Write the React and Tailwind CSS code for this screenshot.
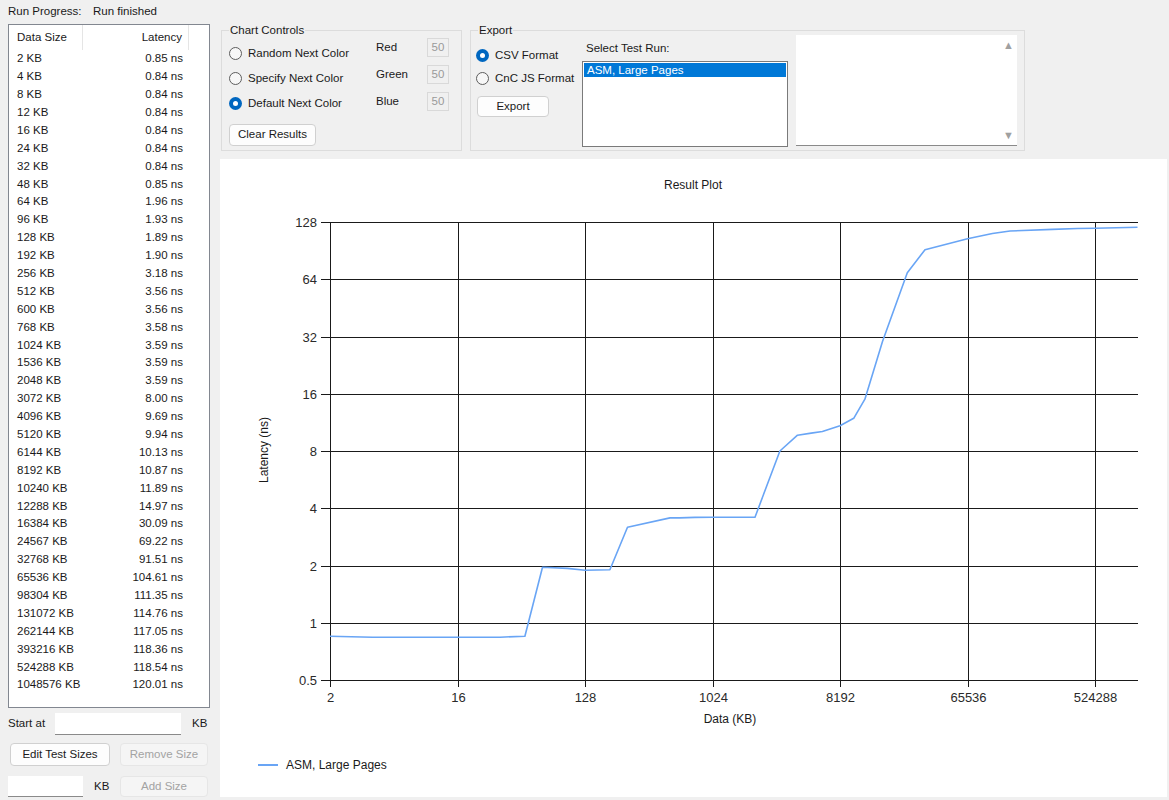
import React from 'react';

const rows = [
  ['2 KB', 2, 0.85], ['4 KB', 4, 0.84], ['8 KB', 8, 0.84], ['12 KB', 12, 0.84],
  ['16 KB', 16, 0.84], ['24 KB', 24, 0.84], ['32 KB', 32, 0.84], ['48 KB', 48, 0.85],
  ['64 KB', 64, 1.96], ['96 KB', 96, 1.93], ['128 KB', 128, 1.89], ['192 KB', 192, 1.9],
  ['256 KB', 256, 3.18], ['512 KB', 512, 3.56], ['600 KB', 600, 3.56], ['768 KB', 768, 3.58],
  ['1024 KB', 1024, 3.59], ['1536 KB', 1536, 3.59], ['2048 KB', 2048, 3.59], ['3072 KB', 3072, 8.0],
  ['4096 KB', 4096, 9.69], ['5120 KB', 5120, 9.94], ['6144 KB', 6144, 10.13], ['8192 KB', 8192, 10.87],
  ['10240 KB', 10240, 11.89], ['12288 KB', 12288, 14.97], ['16384 KB', 16384, 30.09], ['24567 KB', 24567, 69.22],
  ['32768 KB', 32768, 91.51], ['65536 KB', 65536, 104.61], ['98304 KB', 98304, 111.35], ['131072 KB', 131072, 114.76],
  ['262144 KB', 262144, 117.05], ['393216 KB', 393216, 118.36], ['524288 KB', 524288, 118.54], ['1048576 KB', 1048576, 120.01],
];

const font = "'Liberation Sans', Arial, sans-serif";

// plot mapping (page coordinates)
const px = (kb) => 330 + (Math.log2(kb) - 1) * 42.5;
const py = (ns) => 680 - (Math.log2(ns) + 1) * 57.25;

function Radio({ checked, label }) {
  return (
    <div className="flex items-center h-full whitespace-nowrap">
      {checked ? (
        <span className="w-[13px] h-[13px] rounded-full bg-[#0067c0] flex items-center justify-center">
          <span className="w-[5px] h-[5px] rounded-full bg-white" />
        </span>
      ) : (
        <span className="w-[13px] h-[13px] rounded-full border border-[#5d5d5d] bg-[#f7f7f7]" />
      )}
      <span className="ml-[6px] text-[#1a1a1a]">{label}</span>
    </div>
  );
}

function Button({ children, disabled, className }) {
  return (
    <div
      className={`flex items-center justify-center rounded-[4px] border whitespace-nowrap ${
        disabled ? 'bg-[#f5f5f5] border-[#e6e6e6] text-[#a3a3a3]' : 'bg-[#fdfdfd] border-[#d0d0d0] text-[#1a1a1a]'
      } ${className}`}
    >
      {children}
    </div>
  );
}

function GroupBox({ title, className, children }) {
  return (
    <div className={`relative border border-[#dcdcdc] ${className}`}>
      <span className="absolute -top-[8px] left-[7px] leading-[14px] bg-[#f0f0f0] px-[1px] text-[#1a1a1a]">{title}</span>
      {children}
    </div>
  );
}

function Chart() {
  const yTicks = [128, 64, 32, 16, 8, 4, 2, 1, 0.5];
  const xTicks = [2, 16, 128, 1024, 8192, 65536, 524288];
  const points = rows.map((r) => `${px(r[1]).toFixed(1)},${py(r[2]).toFixed(1)}`).join(' ');
  return (
    <svg width="947" height="638" viewBox="220 159 947 638" className="block" fontFamily={font}>
      <text x="693" y="189" textAnchor="middle" fontSize="12" fill="#1a1a1a">Result Plot</text>
      {yTicks.map((v) => {
        const y = Math.round(py(v)) + 0.5;
        return (
          <g key={v}>
            <line x1="321" x2="1138" y1={y} y2={y} stroke="#1a1a1a" strokeWidth="1" shapeRendering="crispEdges" />
            <text x="317" y={y + 4.5} textAnchor="end" fontSize="13" fill="#2a2a2a">{v}</text>
          </g>
        );
      })}
      {xTicks.map((v) => {
        const x = Math.round(px(v)) + 0.5;
        return (
          <g key={v}>
            <line x1={x} x2={x} y1="222" y2="687" stroke="#1a1a1a" strokeWidth="1" shapeRendering="crispEdges" />
            <text x={x} y="702" textAnchor="middle" fontSize="13" fill="#2a2a2a">{v}</text>
          </g>
        );
      })}
      <polyline points={points} fill="none" stroke="#69a5f5" strokeWidth="1.6" strokeLinejoin="round" />
      <text x="730" y="723" textAnchor="middle" fontSize="12" fill="#1a1a1a">Data (KB)</text>
      <text x="268" y="450" textAnchor="middle" fontSize="12" fill="#1a1a1a" transform="rotate(-90 268 450)">Latency (ns)</text>
      <line x1="258" x2="278" y1="765" y2="765" stroke="#69a5f5" strokeWidth="2" />
      <text x="286" y="769" fontSize="12" fill="#1a1a1a">ASM, Large Pages</text>
    </svg>
  );
}

export default function App() {
  return (
    <div
      className="w-[1169px] h-[800px] bg-[#f0f0f0] flex text-[11.5px] text-[#1a1a1a] overflow-hidden"
      style={{ fontFamily: font }}
    >
      {/* Left column */}
      <div className="w-[220px] shrink-0 flex flex-col">
        <div className="h-[24px] pt-[4px] pl-[8px] leading-[14px] flex whitespace-nowrap">
          <span className="w-[85px] shrink-0">Run Progress:</span>
          <span>Run finished</span>
        </div>
        <div className="ml-[8px] w-[202px] h-[684px] border border-[#828790] bg-white">
          <div className="flex h-[25px] items-center">
            <div className="w-[74px] pl-[8px] h-full flex items-center border-r border-[#e5e5e5]">Data Size</div>
            <div className="w-[106px] pr-[6px] h-full flex items-center justify-end border-r border-[#e5e5e5]">Latency</div>
          </div>
          {rows.map((r) => (
            <div key={r[0]} className="flex h-[17.9px] items-center">
              <div className="w-[74px] pl-[8px] whitespace-nowrap">{r[0]}</div>
              <div className="w-[106px] pr-[6px] text-right">{r[2].toFixed(2)} ns</div>
            </div>
          ))}
        </div>
        <div className="mt-[5px] h-[22px] flex items-center pl-[8px]">
          <span className="w-[47px]">Start at</span>
          <div className="w-[126px] h-[22px] bg-white border-b border-[#8a8a8a]" />
          <span className="ml-[11px]">KB</span>
        </div>
        <div className="mt-[8px] h-[23px] flex pl-[10px]">
          <Button className="w-[100px] h-full">Edit Test Sizes</Button>
          <Button disabled className="ml-[10px] w-[88px] h-full">Remove Size</Button>
        </div>
        <div className="mt-[10px] h-[21px] flex items-center pl-[8px]">
          <div className="w-[75px] h-full bg-white border-b border-[#8a8a8a]" />
          <span className="ml-[11px] w-[26px]">KB</span>
          <Button disabled className="w-[88px] h-full">Add Size</Button>
        </div>
      </div>

      {/* Right column */}
      <div className="flex flex-col">
        <div className="flex mt-[30px] h-[121px]">
          <GroupBox title="Chart Controls" className="ml-[1px] w-[241px] h-full pl-[7px] pt-[3px] flex">
            <div className="w-[147px] mt-[7px] flex flex-col">
              <div className="h-[25px]"><Radio label="Random Next Color" /></div>
              <div className="h-[25px]"><Radio label="Specify Next Color" /></div>
              <div className="h-[25px]"><Radio checked label="Default Next Color" /></div>
              <Button className="mt-[8px] w-[87px] h-[22px]">Clear Results</Button>
            </div>
            <div className="flex flex-col">
              {['Red', 'Green', 'Blue'].map((c) => (
                <div key={c} className="h-[27px] flex items-center">
                  <span className="w-[51px]">{c}</span>
                  <div className="w-[22px] h-[19px] border border-[#d9d9d9] bg-[#f0f0f0] text-[#9a9a9a] flex items-center justify-center">50</div>
                </div>
              ))}
            </div>
          </GroupBox>
          <GroupBox title="Export" className="ml-[8px] w-[555px] h-full pl-[5px] flex">
            <div className="w-[106px] mt-[13px] flex flex-col">
              <div className="h-[23px]"><Radio checked label="CSV Format" /></div>
              <div className="h-[23px]"><Radio label="CnC JS Format" /></div>
              <Button className="mt-[6px] ml-[1px] w-[72px] h-[21px]">Export</Button>
            </div>
            <div className="w-[206px] mt-[10px] flex flex-col">
              <div className="h-[14px] leading-[14px] pl-[4px]">Select Test Run:</div>
              <div className="mt-[6px] h-[86px] border border-[#7a7a7a] bg-white p-[1px]">
                <div className="h-[14px] bg-[#0078d7] text-white leading-[14px] pl-[3px]">ASM, Large Pages</div>
              </div>
            </div>
            <div className="ml-[8px] mt-[4px] w-[221px] h-[111px] bg-white border-b border-[#8a8a8a] flex justify-end">
              <div className="w-[17px] h-full flex flex-col items-center justify-between py-[4px] text-[#a0a0a0] text-[11px] leading-[12px]">
                <span>▲</span>
                <span>▼</span>
              </div>
            </div>
          </GroupBox>
        </div>
        <div className="mt-[8px] w-[947px] h-[638px] bg-white">
          <Chart />
        </div>
      </div>
    </div>
  );
}
